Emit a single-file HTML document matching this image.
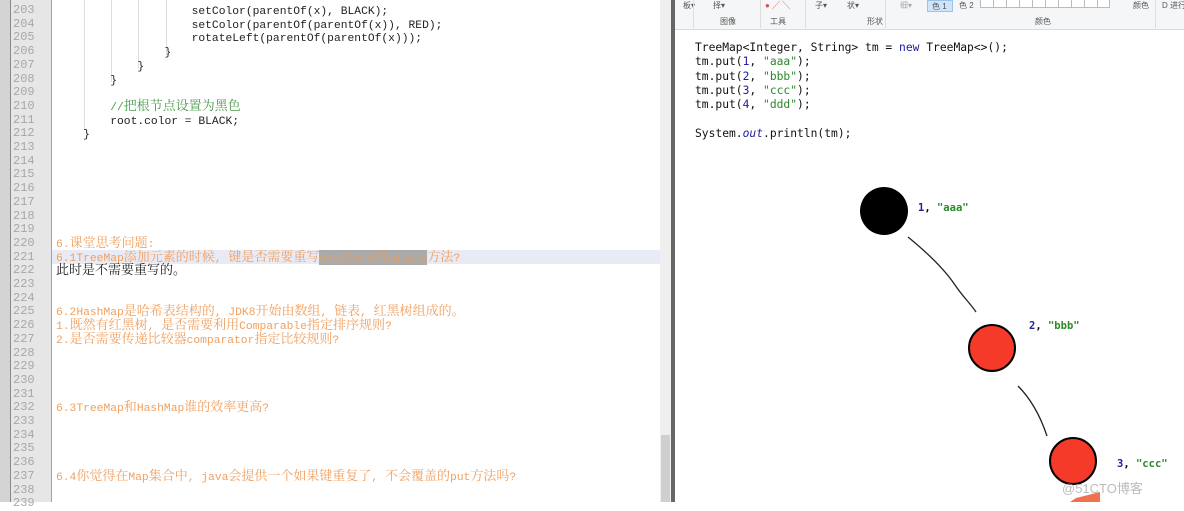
<!DOCTYPE html>
<html><head><meta charset="utf-8"><style>
*{margin:0;padding:0;box-sizing:border-box}
body{width:1184px;height:502px;overflow:hidden;background:#fff;position:relative;font-family:"Liberation Mono","Noto Serif CJK SC",monospace}
.lg{position:absolute;left:0;top:0;width:10px;height:502px;background:#d4d4d4}
.lg2{position:absolute;left:10px;top:0;width:1px;height:502px;background:#888}
.ln{position:absolute;left:11px;top:0;width:40px;height:502px;background:#e6e6e6}
.red{position:absolute;left:51px;top:0;width:1px;height:502px;background:#e08a80}
.row{position:absolute;left:0;height:13.7px;font-size:13px;line-height:13.7px;white-space:pre}
.num{position:absolute;left:13px;color:#a8a8a8;font-family:"Liberation Mono",monospace;font-size:12px}
.txt{position:absolute;left:56px;color:#222}
.l{font-size:11.3px}
.o{color:#f0a060}
.g{color:#4a9a4a}
.guide{position:absolute;width:1px;background:#ddd}
.sb{position:absolute;left:660px;top:0;width:11px;height:502px;background:#efefef}
.th{position:absolute;left:661px;top:435px;width:9px;height:67px;background:#cfcfcf}
.sep{position:absolute;left:671px;top:0;width:4px;height:502px;background:#666}
.rib{position:absolute;left:675px;top:0;width:509px;height:30px;background:#f5f6f7;border-bottom:1px solid #dadbdc;font-family:"Liberation Sans","Noto Sans CJK SC",sans-serif;font-size:8px;color:#555}
.rc{position:absolute;left:695px;font-family:"DejaVu Sans Mono",monospace;font-size:11.3px;line-height:14.3px;white-space:pre;color:#111}
.b{color:#2020a0}.s{color:#2a8a2a}
.lbl{position:absolute;font-family:"DejaVu Sans Mono",monospace;font-size:10.5px;font-weight:bold;white-space:pre}
</style></head><body>
<div class="lg"></div><div class="lg2"></div><div class="ln"></div><div class="red"></div>
<div class="row" style="top:250px;left:52px;width:608px;background:#e8eaf6"></div>
<div class="guide" style="left:84px;top:0;height:130px"></div>
<div class="guide" style="left:111px;top:0;height:82px"></div>
<div class="guide" style="left:138px;top:0;height:68px"></div>
<div class="guide" style="left:166px;top:0;height:55px"></div>
<div id="rows"></div>
<div class="sb"></div><div class="th"></div><div class="sep"></div>
<div class="rib">
<span style="position:absolute;left:8px;top:0">板▾</span>
<span style="position:absolute;left:38px;top:0">择▾</span>
<span style="position:absolute;left:90px;top:0;color:#c55">● ╱ ╲</span>
<span style="position:absolute;left:140px;top:0">子▾</span>
<span style="position:absolute;left:172px;top:0">状▾</span>
<span style="position:absolute;left:225px;top:0;color:#aaa">细▾</span>
<span style="position:absolute;left:252px;top:0;width:26px;height:12px;background:#cfe4f8;border:1px solid #9cc3e8;padding-left:4px">色 1</span>
<span style="position:absolute;left:284px;top:0">色 2</span>
<span style="position:absolute;left:305px;top:0;width:130px;height:8px;border:1px solid #bbb;border-top:none;background:repeating-linear-gradient(90deg,#fff 0 12px,#bbb 12px 13px)"></span>
<span style="position:absolute;left:458px;top:0">颜色</span>
<span style="position:absolute;left:487px;top:0;white-space:nowrap">D 进行编辑</span>
<span style="position:absolute;left:45px;top:16px">图像</span>
<span style="position:absolute;left:95px;top:16px">工具</span>
<span style="position:absolute;left:192px;top:16px">形状</span>
<span style="position:absolute;left:360px;top:16px">颜色</span>
<span style="position:absolute;left:18px;top:0;width:1px;height:28px;background:#ddd"></span>
<span style="position:absolute;left:85px;top:0;width:1px;height:28px;background:#ddd"></span>
<span style="position:absolute;left:130px;top:0;width:1px;height:28px;background:#ddd"></span>
<span style="position:absolute;left:210px;top:0;width:1px;height:28px;background:#ddd"></span>
<span style="position:absolute;left:480px;top:0;width:1px;height:28px;background:#ddd"></span>
</div>
<div class="rc" style="top:41px">TreeMap&lt;Integer, String&gt; tm = <span class="b">new</span> TreeMap&lt;&gt;();
tm.put(<span class="b">1</span>, <span class="s">"aaa"</span>);
tm.put(<span class="b">2</span>, <span class="s">"bbb"</span>);
tm.put(<span class="b">3</span>, <span class="s">"ccc"</span>);
tm.put(<span class="b">4</span>, <span class="s">"ddd"</span>);

System.<i class="b">out</i>.println(tm);</div>
<svg style="position:absolute;left:0;top:0" width="1184" height="502">
<path d="M908 237 C930 255 945 270 955 285 C963 297 970 303 976 312" fill="none" stroke="#222" stroke-width="1.3"/>
<path d="M1018 386 C1030 398 1040 415 1047 436" fill="none" stroke="#222" stroke-width="1.3"/>
<circle cx="884" cy="211" r="24" fill="#000"/>
<circle cx="992" cy="348" r="23" fill="#f53a2a" stroke="#000" stroke-width="2"/>
<circle cx="1073" cy="461" r="23" fill="#f53a2a" stroke="#000" stroke-width="2"/>
<path d="M1076 498 L1100 492 L1100 502 L1070 502Z" fill="#f07050"/>
</svg>
<div class="lbl" style="left:918px;top:202px"><span class="b">1</span>, <span class="s">"aaa"</span></div>
<div class="lbl" style="left:1029px;top:320px"><span class="b">2</span>, <span class="s">"bbb"</span></div>
<div class="lbl" style="left:1117px;top:458px"><span class="b">3</span>, <span class="s">"ccc"</span></div>
<div style="position:absolute;left:1062px;top:478px;font-family:'Liberation Sans','Noto Sans CJK SC',sans-serif;font-size:13px;color:rgba(160,160,160,0.7)">@51CTO博客</div>
<script>
var L={203:'                    setColor(parentOf(x), BLACK);',204:'                    setColor(parentOf(parentOf(x)), RED);',205:'                    rotateLeft(parentOf(parentOf(x)));',206:'                }',207:'            }',208:'        }',210:'        <span class="g">//把根节点设置为黑色</span>',211:'        root.color = BLACK;',212:'    }',
220:'<span class="o">6.课堂思考问题:</span>',221:'<span class="o">6.1TreeMap添加元素的时候, 键是否需要重写<span style="background:#aaa;color:#d8a070">hashCode和equals</span>方法?</span>',222:'此时是不需要重写的。',
225:'<span class="o">6.2HashMap是哈希表结构的, JDK8开始由数组, 链表, 红黑树组成的。</span>',226:'<span class="o">1.既然有红黑树, 是否需要利用Comparable指定排序规则?</span>',227:'<span class="o">2.是否需要传递比较器comparator指定比较规则?</span>',232:'<span class="o">6.3TreeMap和HashMap谁的效率更高?</span>',237:'<span class="o">6.4你觉得在Map集合中, java会提供一个如果键重复了, 不会覆盖的put方法吗?</span>'};
var h='';for(var n=202;n<=239;n++){var t=4+(n-203)*13.7;h+='<div class="row" style="top:'+t+'px;width:660px"><span class="num">'+n+'</span><span class="txt">'+(L[n]||'')+'</span></div>';}
document.getElementById('rows').innerHTML=h;
document.querySelectorAll('.txt').forEach(function(el){
  var w=document.createTreeWalker(el,NodeFilter.SHOW_TEXT),ns=[],x;while(x=w.nextNode())ns.push(x);
  ns.forEach(function(tn){var s=tn.nodeValue;var frag=document.createDocumentFragment();
    s.split(/([\x20-\x7e]+)/).forEach(function(p){if(!p)return;if(/^[\x20-\x7e]+$/.test(p)){var sp=document.createElement('span');sp.className='l';sp.textContent=p;frag.appendChild(sp);}else frag.appendChild(document.createTextNode(p));});
    tn.parentNode.replaceChild(frag,tn);});
});
</script>
</body></html>
